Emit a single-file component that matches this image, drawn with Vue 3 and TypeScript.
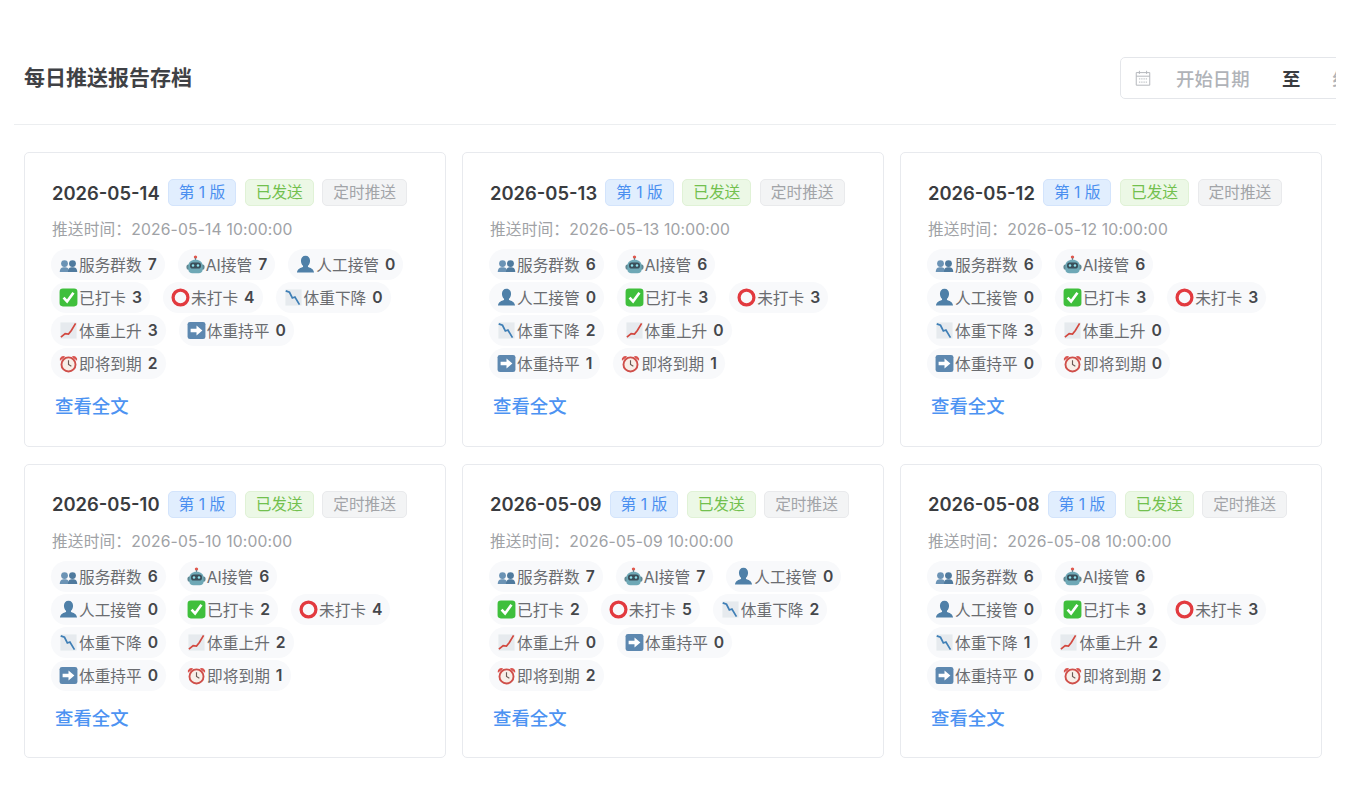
<script setup lang="ts">
// 指标顺序固定，和卡片里的 counts 一一对应
const metrics = [
  { icon: 'group', label: '服务群数' },
  { icon: 'robot', label: 'AI接管' },
  { icon: 'person', label: '人工接管' },
  { icon: 'check', label: '已打卡' },
  { icon: 'ring', label: '未打卡' },
  { icon: 'down', label: '体重下降' },
  { icon: 'up', label: '体重上升' },
  { icon: 'arrow', label: '体重持平' },
  { icon: 'clock', label: '即将到期' },
];

const reports = [
  { date: '2026-05-14', counts: [7, 7, 0, 3, 4, 0, 3, 0, 2] },
  { date: '2026-05-13', counts: [6, 6, 0, 3, 3, 2, 0, 1, 1] },
  { date: '2026-05-12', counts: [6, 6, 0, 3, 3, 3, 0, 0, 0] },
  { date: '2026-05-10', counts: [6, 6, 0, 2, 4, 0, 2, 0, 1] },
  { date: '2026-05-09', counts: [7, 7, 0, 2, 5, 2, 0, 0, 2] },
  { date: '2026-05-08', counts: [6, 6, 0, 3, 3, 1, 2, 0, 2] },
];

// 数字 7 比 6 窄，第一行能多放一个标签
function chipRows(counts: number[]) {
  const sizes = counts[0] === 7 ? [3, 3, 2, 1] : [2, 3, 2, 2];
  const chips = metrics.map((m, i) => ({ ...m, count: counts[i] }));
  let start = 0;
  return sizes.map((size) => {
    const row = chips.slice(start, start + size);
    start += size;
    return row;
  });
}
</script>

<template>
  <div class="page">
    <svg class="sprite" aria-hidden="true">
      <symbol id="i-group" viewBox="0 0 20 20">
        <circle cx="5.800" cy="9" r="3.600" fill="#6b93b5" />
        <path d="M.8 18c0-3.800 1.800-5.200 5-5.200s4.800 1.400 4.800 5.200z" fill="#6b93b5" />
        <circle cx="14.200" cy="9" r="3.600" fill="#4f7a9e" />
        <path d="M9.400 18c0-3.800 1.600-5.200 4.800-5.200s5 1.400 5 5.200z" fill="#4f7a9e" />
      </symbol>
      <symbol id="i-robot" viewBox="0 0 20 20">
        <circle cx="10" cy="2.200" r="1.800" fill="#e2574c" />
        <rect x="9.400" y="3" width="1.200" height="3" fill="#6b7f88" />
        <rect x=".5" y="10" width="19" height="5.500" rx="2" fill="#5f8793" />
        <path d="M2.500 11.500c0-4 3-6.500 7.500-6.500s7.500 2.500 7.500 6.500v4c0 2.200-1.800 3.800-4.200 3.800H6.700c-2.400 0-4.200-1.600-4.200-3.800z" fill="#6ea8b6" />
        <rect x="4.200" y="8" width="11.600" height="6.200" rx="3" fill="#3a4f5a" />
        <circle cx="7.400" cy="11.100" r="1.300" fill="#8fe3ee" />
        <circle cx="12.600" cy="11.100" r="1.300" fill="#8fe3ee" />
      </symbol>
      <symbol id="i-person" viewBox="0 0 20 20">
        <path d="M10 .8c3 0 4.800 2.200 4.800 5.200 0 2.400-1 4.200-2.200 5.400v1.200c2.400.9 6 1.700 6.400 5.900H1c.4-4.200 4-5 6.400-5.900v-1.200C6.200 10.200 5.200 8.400 5.200 6c0-3 1.800-5.200 4.800-5.200z" fill="#4f80a8" />
      </symbol>
      <symbol id="i-check" viewBox="0 0 20 20">
        <rect x=".6" y=".6" width="18.800" height="18.800" rx="3.500" fill="#3fbf3c" />
        <path d="M4.800 10.200l3.700 4L15.200 5" fill="none" stroke="#fff" stroke-width="2.800" />
      </symbol>
      <symbol id="i-ring" viewBox="0 0 20 20">
        <circle cx="10" cy="10" r="7.800" fill="none" stroke="#e23a3f" stroke-width="3.400" />
      </symbol>
      <symbol id="i-down" viewBox="0 0 20 20">
        <rect x="1.500" y="1.500" width="17" height="17" fill="#e6eaee" />
        <path d="M1.800 3l4 1.500 3 6 2.700-1 4.800 8" fill="none" stroke="#3f7fb6" stroke-width="1.800" />
      </symbol>
      <symbol id="i-up" viewBox="0 0 20 20">
        <rect x="1.500" y="1.500" width="17" height="17" fill="#e6eaee" />
        <path d="M2 17l4.500-3.800 3.500.5 3-3.700L17.500 2.500" fill="none" stroke="#d2483f" stroke-width="1.800" />
      </symbol>
      <symbol id="i-arrow" viewBox="0 0 20 20">
        <rect x=".6" y="1" width="18.800" height="18" rx="2.500" fill="#5d88b0" />
        <path d="M3.800 8.200h6.200V4.800l6.200 5.200-6.200 5.200v-3.400H3.800z" fill="#fff" />
      </symbol>
      <symbol id="i-clock" viewBox="0 0 20 20">
        <path d="M1 7a3.600 3.600 0 0 1 5.600-4zM19 7a3.600 3.600 0 0 0-5.600-4z" fill="#d9534f" />
        <circle cx="10" cy="11" r="7.400" fill="#f8efe8" stroke="#cf4f4a" stroke-width="2" />
        <path d="M10 6.500V11l3 1.800" fill="none" stroke="#6a5a55" stroke-width="1.200" />
      </symbol>
      <symbol id="i-cal" viewBox="0 0 20 20">
        <path d="M2.500 4h15v14h-15zM2.500 8h15M6 2v3.500M14 2v3.500" fill="none" stroke="#b4b7bc" stroke-width="1.100" />
        <path d="M5.500 11h9M5.500 14.500h9" fill="none" stroke="#c4c7cb" stroke-width="1.400" stroke-dasharray="1.500 1" />
      </symbol>
    </svg>

    <header class="header">
      <h1 class="title">每日推送报告存档</h1>
      <div class="picker-slot">
        <div class="picker">
          <svg class="cal"><use href="#i-cal" /></svg>
          <span class="ph">开始日期</span>
          <span class="to">至</span>
          <span class="ph">结束日期</span>
        </div>
      </div>
    </header>

    <main class="grid">
      <section v-for="r in reports" :key="r.date" class="card">
        <div class="head">
          <span class="date">{{ r.date }}</span>
          <span class="tag blue">第 1 版</span>
          <span class="tag green">已发送</span>
          <span class="tag gray">定时推送</span>
        </div>
        <p class="time">推送时间：{{ r.date }} 10:00:00</p>
        <div class="chips">
          <div v-for="(row, i) in chipRows(r.counts)" :key="i" class="chip-row">
            <span v-for="c in row" :key="c.label" class="chip">
              <svg class="ico"><use :href="'#i-' + c.icon" /></svg>
              <span>{{ c.label }}</span>
              <b>{{ c.count }}</b>
            </span>
          </div>
        </div>
        <a class="link">查看全文</a>
      </section>
    </main>
  </div>
</template>

<style scoped>
.page {
  width: 1322px;
  margin-left: 14px;
  padding: 57px 0 40px;
  overflow: hidden;
  font-family: Inter, "Noto Sans CJK SC", sans-serif;
  color: #333;
}

.sprite {
  display: none;
}

.header {
  display: flex;
  align-items: center;
  justify-content: space-between;
  padding: 0 0 25px 10px;
  border-bottom: 1px solid #eceef0;
}

.title {
  margin: 0;
  font-size: 21px;
  font-weight: 600;
  line-height: 42px;
  color: #3f4145;
}

.picker-slot {
  width: 216px;
  overflow: hidden;
}

.picker {
  display: flex;
  align-items: center;
  width: 340px;
  height: 42px;
  box-sizing: border-box;
  padding-left: 13px;
  border: 1px solid #e4e6ea;
  border-radius: 5px;
  font-size: 18.4px;
}

.cal {
  width: 18px;
  height: 18px;
  margin-right: 24px;
}

.ph {
  width: 74px;
  white-space: nowrap;
  font-weight: 500;
  color: #b0b3b8;
}

.to {
  margin: 0 32px;
  font-weight: 600;
  color: #3a3c40;
}

.grid {
  display: grid;
  grid-template-columns: repeat(3, 422px);
  gap: 17px 16px;
  padding: 27px 0 0 10px;
}

.card {
  padding: 26px 27px 26.5px;
  border: 1px solid #e8eaee;
  border-radius: 5px;
  background: #fff;
}

.head {
  display: flex;
  align-items: center;
  height: 27px;
  white-space: nowrap;
}

.date {
  margin-right: 8px;
  font-size: 18.4px;
  font-weight: 600;
  color: #3a3c40;
}

.tag {
  box-sizing: border-box;
  height: 27px;
  margin-right: 8.5px;
  padding: 0 10px;
  border: 1px solid;
  border-radius: 5px;
  font-size: 15.7px;
  line-height: 25px;
}

.blue {
  border-color: #d3e4fc;
  background: #e1eefe;
  color: #4a8ff0;
}

.green {
  border-color: #e0f2d6;
  background: #ecf8e6;
  color: #72c04e;
}

.gray {
  border-color: #e9eaec;
  background: #f3f4f5;
  color: #a2a4a8;
}

.time {
  margin: 13px 0 0;
  font-size: 15.7px;
  line-height: 22px;
  letter-spacing: 0.15px;
  color: #a0a2a6;
}

.chips {
  display: flex;
  flex-direction: column;
  gap: 2px;
  margin: 8px 0 0 -1px;
}

.chip-row {
  display: flex;
  gap: 13px;
}

.chip {
  display: flex;
  align-items: center;
  height: 31px;
  padding: 0 8px;
  border-radius: 16px;
  background: #f8f9fb;
  font-size: 15.7px;
  color: #6a6c70;
  white-space: nowrap;
}

.chip b {
  margin-left: 6px;
  font-weight: 600;
  color: #45474b;
}

.ico {
  width: 19px;
  height: 19px;
  margin-right: 1px;
}

.link {
  display: block;
  margin-top: 14px;
  padding-left: 3px;
  font-size: 18.4px;
  font-weight: 500;
  line-height: 26px;
  color: #4d93f2;
}
</style>

<style>
html,
body {
  background: #fff;
}
</style>
